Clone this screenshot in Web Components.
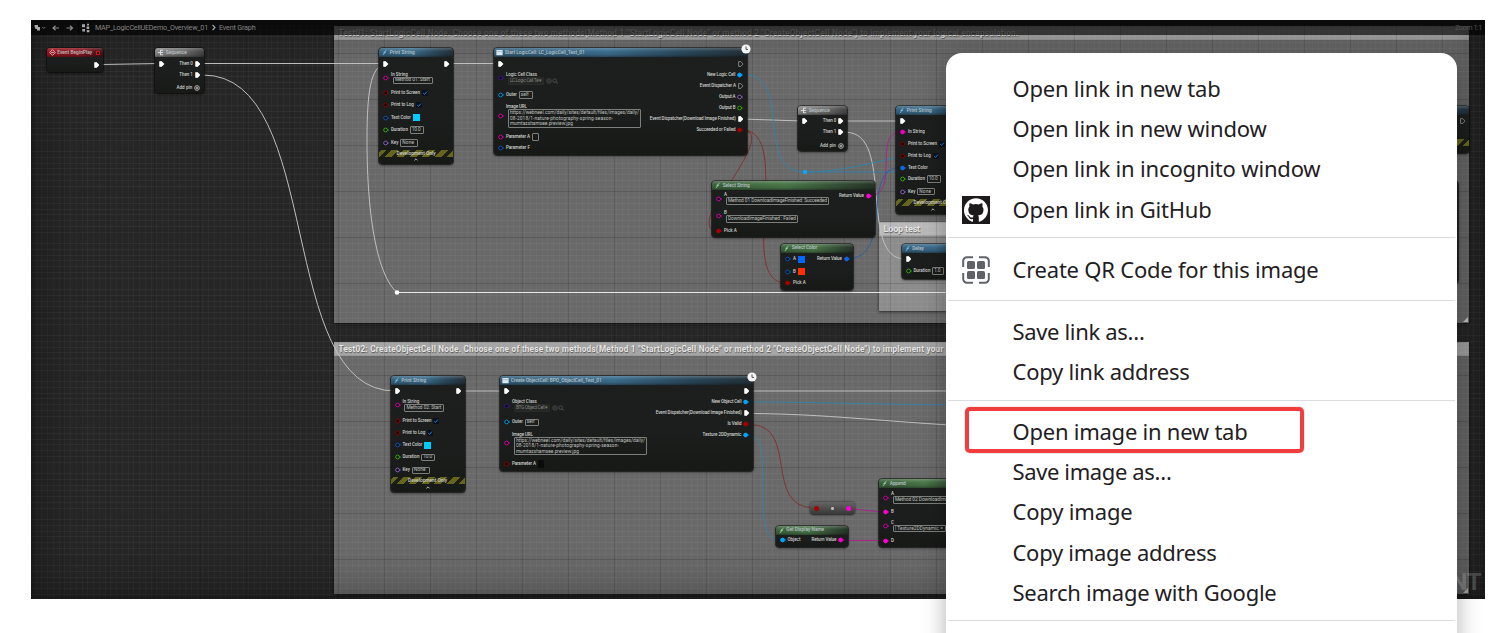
<!DOCTYPE html>
<html lang="en">
<head>
<meta charset="utf-8">
<title>Event Graph</title>
<style>
html,body{margin:0;height:100%;background:#fff;overflow:hidden}
body{font-family:Roboto,"Liberation Sans",sans-serif}
</style>
</head>
<body>
<app-page></app-page>
<script>
// Spreads each text over the width given in data-w by adjusting its letter spacing.
function fit(root){
  root.querySelectorAll('[data-w]').forEach(e=>{
    const w=+e.dataset.w; if(!w) return;
    const r=document.createRange(); r.selectNodeContents(e);
    const n=r.getBoundingClientRect().width;
    if(n) e.style.letterSpacing=((w-n)/e.textContent.length)+'px';
  });
}
const OX=31, OY=20;
const exec=(f)=>`<svg width="5.6" height="6" viewBox="0 0 5.6 6"><path d="M.6 .6H2.8L5.1 3 2.8 5.4H.6Z" fill="${f?'#fff':'none'}" stroke="${f?'#fff':'#aaa'}" stroke-width=".7" stroke-linejoin="round"/></svg>`;
const dot=(c,f)=>`<svg width="6" height="6" viewBox="0 0 6 6"><circle cx="2.6" cy="3" r="1.9" fill="${f?c:'#0a0c0c'}" stroke="${c}" stroke-width="1"/><path d="M4.8 2 6 3 4.8 4Z" fill="${c}"/></svg>`;

class BpPin extends HTMLElement{
  connectedCallback(){
    const p=this.pin, s=this.attachShadow({mode:'open'});
    const icon=p.t==='exec'?exec(p.f!==0):p.t==='add'?`<svg width="6" height="6" viewBox="0 0 6 6"><circle cx="3" cy="3" r="2.4" fill="none" stroke="#ddd" stroke-width=".7"/><path d="M3 1.6V4.4M1.6 3H4.4" stroke="#ddd" stroke-width=".8"/></svg>`:dot(p.c,p.f);
    const lab=p.l?`<span class="l" data-w="${p.w||0}">${p.l}</span>`:'';
    let fld='';
    if(p.field) fld=`<span class="f ${p.cls||''}" style="width:${p.fw}px"><span data-w="${p.tw||0}">${p.field}</span></span>`;
    if(p.lines) fld=`<span class="f m" style="width:${p.fw}px">${p.lines.map(x=>`<span data-w="${x[1]}">${x[0]}</span>`).join('')}</span>`;
    if(p.check) fld=`<svg width="6" height="6" viewBox="0 0 6 6"><rect width="6" height="6" rx="1" fill="#07101c"/><path d="M1.2 3.1 2.6 4.4 5 1.5" fill="none" stroke="#1b80e0" stroke-width="1"/></svg>`;
    if(p.sw) fld=`<span class="s" style="background:${p.sw}"></span>`;
    if(p.tools) fld=`<span class="row">${fld}<svg width="13" height="6" viewBox="0 0 13 6" fill="none" stroke="#595b5a" stroke-width=".7"><circle cx="3" cy="3" r="2.2"/><path d="M2 3H4M9.8 3.9 12 5.4"/><circle cx="8.6" cy="2.6" r="1.8"/></svg></span>`;
    s.innerHTML=`<style>
:host{display:flex;height:6px;margin-top:${p.gap}px;align-items:center;gap:${p.pg??1.8}px;flex-direction:${p.side==='r'?'row-reverse':'row'};white-space:nowrap;font:500 4.5px/6px Roboto,sans-serif;color:#cfd1cf}
svg{flex:none;display:block}
.st{display:flex;flex-direction:column;align-items:flex-start;gap:0}
.st .f,.st .row{margin-left:2px}.st .l{line-height:5px}
.row{display:flex;align-items:center;gap:2px}.row .f{margin-left:0!important}
.f{box-sizing:border-box;height:7.5px;border:1px solid #7c7f7c;border-radius:1px;padding:0 1px;display:flex;align-items:center;overflow:hidden;font-weight:400;font-size:4.8px;color:#c0c2c0}
.f.dim{border-color:#292b29;background:#252725;color:#80827f}
.f.bare{border-color:#0a0b0a;background:#0a0b0a}
.f.m{height:18.5px;flex-direction:column;align-items:flex-start;line-height:5.5px;justify-content:center}
.s{width:7px;height:7px}
</style>${icon}${p.stack?`<span class="st">${lab}${fld}</span>`:lab+fld}`;
    fit(s);
  }
}
customElements.define('bp-pin',BpPin);

class BpNode extends HTMLElement{
  connectedCallback(){
    const n=this.node, s=this.attachShadow({mode:'open'});
    const heads={
      red:'linear-gradient(90deg,#9c1520,#8c1822 60%,#43151a)',
      gray:'linear-gradient(90deg,#8b8b8b,#6d6d6d 60%,#454545)',
      blue:'linear-gradient(90deg,#37637f,#3d6f90 45%,#2c4a5d 75%,#24323b)',
      green:'linear-gradient(90deg,#3f6440,#4c7a4c 45%,#39553a 75%,#263628)'};
    const ic={
      red:'<path d="M4 .8 7.2 4 4 7.2.8 4Z" fill="none" stroke="#e8c8c8" stroke-width="1"/><path d="M2.5 4H5.5" stroke="#e8c8c8"/>',
      gray:'<path d="M1 4H4M4 1V7M4 1.4H7M4 4H7M4 6.6H7" stroke="#ddd" stroke-width="1.1" fill="none"/>',
      blue:'<path d="M2 6.8C4 7 3.8 1.4 6.3 1.4M2.8 3.8H5.6" stroke="#7cc0ec" fill="none"/>',
      green:'<path d="M2 6.8C4 7 3.8 1.4 6.3 1.4M2.8 3.8H5.6" stroke="#a4d8a4" fill="none"/>',
      obj:'<path d="M.4 1H7.6V7H.4Z" fill="#dbe6ee"/><path d="M.4 3H7.6" stroke="#89a3b4" stroke-width=".7"/>'};
    s.innerHTML=`<style>
:host{position:absolute;left:${n.x-OX-.4}px;top:${n.y-OY}px;width:${n.w}px;height:${n.h}px;box-sizing:border-box;display:flex;flex-direction:column;border-radius:3px;background:linear-gradient(#1c1f1d,#1b1e1c 60%,#171917);box-shadow:0 0 0 .6px #0b0c0b,0 1px 3px #000a}
header{height:9px;flex:none;box-sizing:border-box;border-radius:3px 3px 0 0;background:linear-gradient(#fff3 0,#fff0 35%,#0002 75%,#0006),${heads[n.k]||'none'};display:flex;align-items:center;gap:1.6px;padding:0 2px;font:500 4.8px/8px Roboto,sans-serif;color:#b9c2c6;white-space:nowrap;overflow:hidden}
header svg{flex:none}
.sq{width:4px;height:4px;background:#300;border:1px solid #d01818;box-sizing:border-box;margin-left:auto;margin-right:1px}
main{display:flex;justify-content:space-between;flex:1;min-height:0;padding:0 3.4px 0 4px}
.c{display:flex;flex-direction:column}
footer{position:relative;height:14.5px;flex:none;font:500 4.8px/7px Roboto,sans-serif;color:#d4d4c8;text-align:center}
.tape{height:7px;background:linear-gradient(135deg,#1c1e1a 2px,#0000 0),repeating-linear-gradient(135deg,#65651c 0 5px,#1c1e1a 5px 8.8px);overflow:hidden;white-space:nowrap}
footer svg{display:block;margin:1.5px auto 0}
.clock{position:absolute;right:-4px;top:-4px}
</style>
${n.k?`<header><svg width="7" height="7" viewBox="0 0 8 8">${ic[n.obj?'obj':n.k]}</svg><span data-w="${n.tw||0}">${n.t||''}</span>${n.k==='red'?'<i class="sq"></i>':''}</header>`:''}
<main><div class="c L"></div><div class="c R"></div></main>
${n.dev?`<footer><div class="tape"><span data-w="${n.dev===1?39:0}">${n.dev===1?'Development Only':n.dev}</span></div><svg width="4" height="3" viewBox="0 0 4 3"><path d="M.4 2.4 2 .8 3.6 2.4" stroke="#ccc" fill="none" stroke-width=".9"/></svg></footer>`:''}
${n.clock?`<svg class="clock" width="10" height="10" viewBox="0 0 10 10"><circle cx="5" cy="5" r="4.6" fill="#f4f4f4"/><path d="M5 2.4V5.4H7" fill="none" stroke="#444" stroke-width=".9"/></svg>`:''}`;
    for(const side of ['L','R']){
      let end=n.y+(n.k?9:0);
      for(const p of n[side]||[]){
        const e=document.createElement('bp-pin');
        e.pin={...p,side:side.toLowerCase(),gap:p.y-3-end}; end=p.y+3;
        s.querySelector('.'+side).append(e);
      }
    }
    fit(s);
  }
}
customElements.define('bp-node',BpNode);

class BpComment extends HTMLElement{
  connectedCallback(){
    const a=n=>+this.getAttribute(n);
    const s=this.attachShadow({mode:'open'});
    s.innerHTML=`<style>
:host{position:absolute;left:${a('x')-OX}px;top:${a('y')-OY}px;width:${a('w')}px;height:${a('h')}px;box-sizing:border-box;background:${this.getAttribute('tone')||'#a6a6a686'};box-shadow:0 1px 3px #000a}
div{height:14px;box-sizing:border-box;background:#ffffff66;border:1px solid #8886;padding-left:4px;font:700 ${a('fs')||8.2}px/13px Roboto,sans-serif;color:#e6e6e6;white-space:nowrap;overflow:hidden;text-shadow:.5px .8px 1px #0008}
svg{position:absolute;right:1px;bottom:1px}
</style><div><span data-w="${a('tw')}"><slot></slot></span></div><svg width="5" height="5"><path d="M5 0V5H0Z" fill="#c8c8c8"/></svg>`;
    const sp=s.querySelector('span'), r=document.createRange(); r.selectNodeContents(this);
    sp.style.letterSpacing=((a('tw')-r.getBoundingClientRect().width)/this.textContent.length)+'px';
  }
}
customElements.define('bp-comment',BpComment);

class GraphToolbar extends HTMLElement{
  connectedCallback(){
    const s=this.attachShadow({mode:'open'});
    s.innerHTML=`<style>
:host{position:absolute;left:0;right:0;top:0;height:15px;display:flex;align-items:center;background:#000000a0;font:400 7.2px/15px Roboto,sans-serif;color:#858585;white-space:nowrap}
svg{flex:none;display:block}.z{margin-left:auto;padding-right:3px;color:#545454}
.chev{margin:0 3px 0 4px}
</style><svg width="64" height="15" viewBox="0 0 64 15"><path d="M3.600 5H7V7H9V10.600H6V9H4.600L3.600 7Z" fill="#a8a8a8"/><path d="M11.300 7 12.800 8.500 14.300 7" stroke="#777" fill="none"/><path d="M28 8H22M24.500 5.700 22 8 24.500 10.300M35.500 8H41.500M39 5.700 41.500 8 39 10.300" stroke="#8b8b8b" fill="none" stroke-width="1.200"/><path d="M47.500 2V13" stroke="#000"/><path d="M51 4.300H54V7.300H51ZM55.600 6.400H58.200V9H55.600ZM51.300 9H54V11.600H51.300ZM55.800 10H58.400V12.200H55.800ZM56 3.800H58V5.400H56Z" fill="#a6a6a6"/></svg><span data-w="113">MAP_LogicCellUEDemo_Overview_01</span><svg class="chev" width="4" height="7" viewBox="0 0 4 7"><path d="M.6 1 3 3.500.6 6" fill="none" stroke="#aaa" stroke-width="1.100"/></svg><span data-w="36.5">Event Graph</span><span class="z" data-w="27">Zoom 1:1</span>`;
    fit(s);
  }
}
customElements.define('graph-toolbar',GraphToolbar);

const M='#d800a8',R='#8c0000',B='#0b56b8',C='#0095e0',G='#36b000',P='#8c5fc0',V='#3c1490';
const printPins=(y,txt,filled)=>[
 {t:'exec',y:y},
 filled?{c:'#f000c0',f:1,y:y+11,l:'In String',w:17}:{c:M,y:y+14.3,stack:1,l:'In String',w:17,field:txt,fw:40,tw:35},
 {c:R,y:y+(filled?22.5:29.7),l:'Print to Screen',w:29,check:1},{c:R,y:y+(filled?35:42),l:'Print to Log',w:23,check:1},
 {c:filled?'#0868e8':B,f:filled,y:y+(filled?46.5:54.5),l:'Text Color',w:20,sw:filled?'':'#00ccff'},
 {c:G,y:y+(filled?58:66.5),l:'Duration',w:17,field:'10.0',fw:14,tw:9},{c:P,y:y+(filled?70.5:79.3),l:'Key',w:7.5,field:'None',fw:18,tw:12}];
const url=[['https://webneel.com/daily/sites/default/files/images/daily/',129],['08-2018/1-nature-photography-spring-season-',103],['mumtazshamsee.preview.jpg',63]];
const nodes=[
{x:47,y:48,w:56,h:24,k:'red',t:'Event BeginPlay',tw:35,R:[{t:'exec',y:64.5}]},
{x:155.5,y:48,w:48.5,h:45,k:'gray',t:'Sequence',tw:21,L:[{t:'exec',y:63.5}],R:[{t:'exec',y:63.5,l:'Then 0',w:13.5},{t:'exec',y:75,l:'Then 1',w:13.5},{t:'add',y:88,l:'Add pin',w:16}]},
{x:379.5,y:48,w:74,h:116,k:'blue',t:'Print String',tw:25,dev:1,L:printPins(63.5,'Method 01: Start'),R:[{t:'exec',y:63.5}]},
{x:494.5,y:48,w:252.5,h:107,k:'blue',obj:1,t:'Start LogicCell: LC_LogicCell_Test_01',tw:80,clock:1,
 L:[{t:'exec',y:63.5},{c:V,y:78.3,stack:1,l:'Logic Cell Class',w:31,field:'LC Logic Cell Te ▾',fw:36,tw:32,cls:'dim',tools:1},{c:C,y:95,l:'Outer',w:11,field:'self',fw:14,tw:8},{c:M,y:115.8,stack:1,l:'Image URL',w:21,lines:url,fw:133},{c:M,y:137,l:'Parameter A',w:24,field:' ',fw:7},{c:B,y:148.5,l:'Parameter F',w:24}],
 R:[{t:'exec',f:0,y:63.5},{c:'#00a4ff',f:1,y:74.5,l:'New Logic Cell',w:28.5},{t:'exec',f:0,y:86,l:'Event Dispatcher A',w:36},{c:P,y:97,l:'Output A',w:16.5},{c:G,y:108,l:'Output B',w:16.5},{t:'exec',y:119,l:'Event Dispatcher(Download Image Finished)',w:86},{c:'#a80000',f:1,y:130,l:'Succeeded or Failed',w:39}]},
{x:798.5,y:106,w:49,h:44.5,k:'gray',t:'Sequence',tw:21,L:[{t:'exec',y:121}],R:[{t:'exec',y:121,l:'Then 0',w:13.5},{t:'exec',y:132.3,l:'Then 1',w:13.5},{t:'add',y:145.7,l:'Add pin',w:16}]},
{x:896.5,y:106,w:74,h:107.5,k:'blue',t:'Print String',tw:25,dev:1,L:printPins(121,'',1)},
{x:712.5,y:181,w:163,h:56,k:'green',t:'Select String',tw:27,L:[{c:M,y:198.6,stack:1,l:'A',field:'Method 01 DownloadImageFinished: Succeeded',fw:103,tw:99},{c:M,y:216.5,stack:1,l:'B',field:'DownloadImageFinished : Failed',fw:72,tw:68},{c:'#a80000',f:1,y:231,l:'Pick A',w:13}],R:[{c:'#ff00d0',f:1,y:195.5,l:'Return Value',w:25}]},
{x:781.5,y:243.5,w:72,h:46.5,k:'green',t:'Select Color',tw:25.5,L:[{c:B,y:259,l:'A',sw:'#0068ff'},{c:B,y:271.5,l:'B',sw:'#ff3000'},{c:'#a80000',f:1,y:283,l:'Pick A',w:13}],R:[{c:'#0868e8',f:1,y:259,l:'Return Value',w:25}]},
{x:902,y:244,w:74,h:34.5,k:'blue',t:'Delay',tw:11.5,L:[{t:'exec',y:259},{c:G,y:271,l:'Duration',w:17,field:'1.0',fw:12,tw:6}]},
{x:391,y:376,w:74,h:115.5,k:'blue',t:'Print String',tw:25,dev:1,L:printPins(391,'Method 02: Start'),R:[{t:'exec',y:391}]},
{x:500.5,y:376,w:252.5,h:95,k:'blue',obj:1,t:'Create ObjectCell: BPO_ObjectCell_Test_01',tw:91,clock:1,
 L:[{t:'exec',y:391},{c:V,y:405.7,stack:1,l:'Object Class',w:25,field:'BTG Object Cell ▾',fw:36,tw:32,cls:'dim',tools:1},{c:C,y:422.5,l:'Outer',w:11,field:'self',fw:14,tw:8},{c:M,y:443.3,stack:1,l:'Image URL',w:21,lines:url,fw:133},{c:R,y:464,l:'Parameter A',w:24,field:' ',fw:6,cls:'bare'}],
 R:[{t:'exec',y:391},{c:'#00a4ff',f:1,y:402,l:'New Object Cell',w:30},{t:'exec',y:413.3,l:'Event Dispatcher(Download Image Finished)',w:86},{c:'#a80000',f:1,y:424.5,l:'Is Valid',w:14},{c:'#00a4ff',f:1,y:435.5,l:'Texture 2DDynamic',w:39}]},
{x:879.5,y:479,w:100,h:68,k:'green',t:'Append',tw:16,L:[{c:M,y:497.5,stack:1,l:'A',field:'Method 02 DownloadImageFinished',fw:80,tw:76},{c:'#ff00d0',f:1,y:512,l:'B'},{c:M,y:526,stack:1,l:'C',field:'| Texture2DDynamic =',fw:53,tw:48},{c:'#ff00d0',f:1,y:540.5,l:'D'}]},
{x:776,y:525.5,w:72,h:21.5,k:'green',t:'Get Display Name',tw:38,L:[{c:'#00a4ff',f:1,y:540,l:'Object',w:13}],R:[{c:'#ff00d0',f:1,y:540,l:'Return Value',w:25}]},
{x:1395,y:106,w:74,h:47,k:'blue',t:'',dev:' ',R:[{t:'exec',f:0,y:121}]},
{x:1400,y:181,w:58,h:102,k:''}
];

class GraphCanvas extends HTMLElement{
  connectedCallback(){
    const s=this.attachShadow({mode:'open'});
    const w=(d,c='#c4c4c4',sw=.95)=>`<path d="${d}" stroke="${c}" stroke-width="${sw}"/>`;
    const red='#862525',blue='#2a86b4',mg='#b01c92';
    s.innerHTML=`<style>
:host{display:block;position:relative;width:1454px;height:579px;overflow:hidden;background:#262626}
.grid{position:absolute;inset:0;background:
 repeating-linear-gradient(90deg,#0000 0 31px,#0000001c 31px 32px,#0000 32px 46px),repeating-linear-gradient(#0000 0 33px,#0000002e 33px 34px,#0000 34px 46px),
 repeating-linear-gradient(90deg,#0000 0 4.75px,#ffffff07 4.75px 5.75px),repeating-linear-gradient(#0000 0 4.75px,#ffffff0b 4.75px 5.75px)}
svg.w{position:absolute;inset:0;fill:none}
.shade{position:absolute;inset:0;box-shadow:inset 0 0 50px #0006,inset 0 0 8px #0005;pointer-events:none}
.mark{position:absolute;right:4px;bottom:3px;font:700 24px/28px Roboto,sans-serif;color:#ffffff30;letter-spacing:-.5px}
.plus{position:absolute;left:779px;top:482px;width:45px;height:13px;border-radius:4px;background:linear-gradient(#656565,#343434);box-shadow:0 0 2px #000c;display:flex;align-items:center;justify-content:space-between;padding:0 4px;box-sizing:border-box}
.plus i{width:5px;height:5px;border-radius:50%;background:#a80000}.plus i+i{width:2.5px;height:2.5px;background:#bbb}.plus i:last-child{width:5px;height:5px;background:#ff00d0}
</style>
<bp-comment x="333.5" y="25.5" w="1135.5" h="297.5" tw="680">Test01: StartLogicCell Node. Choose one of these two methods(Method 1 "StartLogicCell Node" or method 2 "CreateObjectCell Node") to implement your logical encapsulation.</bp-comment>
<bp-comment x="333.5" y="342" w="1135.5" h="252" tw="693">Test02: CreateObjectCell Node. Choose one of these two methods(Method 1 "StartLogicCell Node" or method 2 "CreateObjectCell Node") to implement your logical encapsulation.</bp-comment>
<bp-comment x="878.5" y="221.5" w="400" h="89" tw="36.5" fs="9" tone="#b0b0b080">Loop test</bp-comment>
<div class="grid"></div><div class="shade"></div>
<svg class="w" width="1454" height="579" viewBox="31 20 1454 579">
${w('M101 64.5 160 63.5M200 63.5H384M203 75C325 75 275 391 395 391')}
${w('M384 64C371 68 367 90 367 140C367 220 378 276 397 292.500M449 63.5H498M742 119 802 121M842 121H900M846 132.3C895 132.3 858 259 905 259M461 391H505M748 391H1000M748 413.5C830 414 870 421 1000 428')}
${w('M397 292.500H1000','#e8e8e8',1.1)}
<circle cx="397" cy="292.5" r="2.3" fill="#fff"/>
${w('M744 74.5C794 76 753 172 805 172M805 172C840 172 870 163 895 158M805 172H895M750 402C830 402 870 405 1000 405M750 435.5C778 437 745 540 781 540',blue,.8)}
<circle cx="805" cy="172" r="2.2" fill="#14a4f4"/>
${w('M742 130C762 131 748 155 728 186C712 206 700 231 718 231M742 130C795 131 735 283 786 283M750 424.5C800 425 762 508 815 508',red,.8)}
${w('M870 195.5C900 195.5 873 132 900 132M853 509 883 512M842 540.5H883',mg,.9)}${w('M848 259C895 257 860 167 900 167.5','#285ea0',.9)}
</svg>
<div class="nodes"></div>
<div class="plus"><i></i><i></i><i></i></div>
<div class="mark">NT</div>
<graph-toolbar></graph-toolbar>`;
    const box=s.querySelector('.nodes');
    for(const n of nodes){const e=document.createElement('bp-node');e.node=n;box.append(e);}
  }
}
customElements.define('graph-canvas',GraphCanvas);

class MenuItem extends HTMLElement{
  connectedCallback(){
    const s=this.attachShadow({mode:'open'});
    s.innerHTML=`<style>
:host{position:relative;display:flex;align-items:center;height:40.2px;padding-left:16px;font:400 22px/30px "Noto Sans",sans-serif;color:#1f2023;white-space:nowrap}
.i{width:28px;height:28px;margin-right:22.500px;flex:none}
.t{padding-bottom:2px}
:host([marked])::after{content:"";position:absolute;left:19px;top:-5px;width:339px;height:46.5px;box-sizing:border-box;border:4.5px solid #f23d3f;border-radius:5px;box-shadow:0 0 1px #7c3030}
</style><span class="i"><slot name="icon"></slot></span><span class="t"><slot></slot></span>`;
    const t=[...this.childNodes].filter(n=>n.nodeType===3&&n.data.trim())[0];
    const r=document.createRange(); r.selectNodeContents(t);
    s.querySelector('.t').style.letterSpacing=((this.getAttribute('w')-r.getBoundingClientRect().width)/t.data.length)+'px';
  }
}
class MenuRule extends HTMLElement{
  connectedCallback(){
    this.attachShadow({mode:'open'}).innerHTML=`<style>:host{display:block;height:1px;background:#dadce0;margin:${this.getAttribute('gap')}}</style>`;
  }
}
class ContextMenu extends HTMLElement{
  connectedCallback(){
    this.attachShadow({mode:'open'}).innerHTML=`<style>
:host{position:absolute;left:946px;top:53px;width:511px;height:680px;box-sizing:border-box;padding-top:16px;display:flex;flex-direction:column;background:#fff;border-radius:16px;box-shadow:0 6px 24px #0000004d}
::slotted(*){flex:none}</style><slot></slot>`;
  }
}
class AppPage extends HTMLElement{
  connectedCallback(){
    this.attachShadow({mode:'open'}).innerHTML=`<style>
:host{display:block;position:relative;width:1510px;height:633px;overflow:hidden;box-sizing:border-box;padding:20px 25px 0 31px;background:#fff}
svg{display:block}</style>
<graph-canvas></graph-canvas>
<context-menu>
<menu-item w="208">Open link in new tab</menu-item>
<menu-item w="254">Open link in new window</menu-item>
<menu-item w="308">Open link in incognito window</menu-item>
<menu-item w="199"><svg slot="icon" width="28" height="28" viewBox="0 0 28 28"><path d="M0 0H28V28H0Z" fill="#1c1a1b"/><path transform="translate(2 2)" fill="#fff" d="M12 .3C5.4.3 0 5.7 0 12.3c0 5.3 3.4 9.8 8.2 11.4.6.1.8-.3.8-.6v-2c-3.3.7-4-1.6-4-1.6-.6-1.4-1.4-1.8-1.4-1.8-1-.7.1-.7.1-.7 1.2.1 1.8 1.2 1.8 1.2 1.1 1.8 2.8 1.3 3.5 1 .1-.8.4-1.3.8-1.6-2.7-.3-5.5-1.3-5.5-6 0-1.3.5-2.3 1.2-3.2-.1-.3-.5-1.5.1-3.2 0 0 1-.3 3.3 1.2a11.5 11.5 0 0 1 6 0c2.3-1.5 3.3-1.2 3.3-1.2.7 1.7.3 2.9.1 3.2.8.9 1.2 1.9 1.2 3.2 0 4.7-2.8 5.7-5.5 6 .4.4.8 1.1.8 2.2v3.3c0 .3.2.7.8.6A12 12 0 0 0 24 12.3C24 5.7 18.6.3 12 .3Z"/></svg>Open link in GitHub</menu-item>
<menu-rule gap="7.2px 2px 12px"></menu-rule>
<menu-item w="306"><svg slot="icon" width="28" height="28" viewBox="0 0 28 28"><path d="M11 1.2H5A3.8 3.8 0 0 0 1.2 5V11M17 1.2H23A3.8 3.8 0 0 1 26.8 5V11M1.2 17V23A3.8 3.8 0 0 0 5 26.8H11M26.8 17V23A3.8 3.8 0 0 1 23 26.8H17" fill="none" stroke="#5f6368" stroke-width="2"/><g fill="#5f6368"><rect x="5" y="5" width="8" height="8" rx="1.5"/><rect x="15" y="5" width="8" height="8" rx="1.5"/><rect x="5" y="15" width="8" height="8" rx="1.5"/><rect x="15" y="15" width="8" height="8" rx="1.5"/></g></svg>Create QR Code for this image</menu-item>
<menu-rule gap="9.8px 2px 11px"></menu-rule>
<menu-item w="132">Save link as…</menu-item>
<menu-item w="177">Copy link address</menu-item>
<menu-rule gap="7.7px 2px 11px"></menu-rule>
<menu-item w="235" marked>Open image in new tab</menu-item>
<menu-item w="159">Save image as…</menu-item>
<menu-item w="120">Copy image</menu-item>
<menu-item w="204">Copy image address</menu-item>
<menu-item w="264">Search image with Google</menu-item>
<menu-rule gap="7.2px 2px 11px"></menu-rule>
</context-menu>`;
  }
}
customElements.define('menu-item',MenuItem);
customElements.define('menu-rule',MenuRule);
customElements.define('context-menu',ContextMenu);
customElements.define('app-page',AppPage);
</script>
</body>
</html>
